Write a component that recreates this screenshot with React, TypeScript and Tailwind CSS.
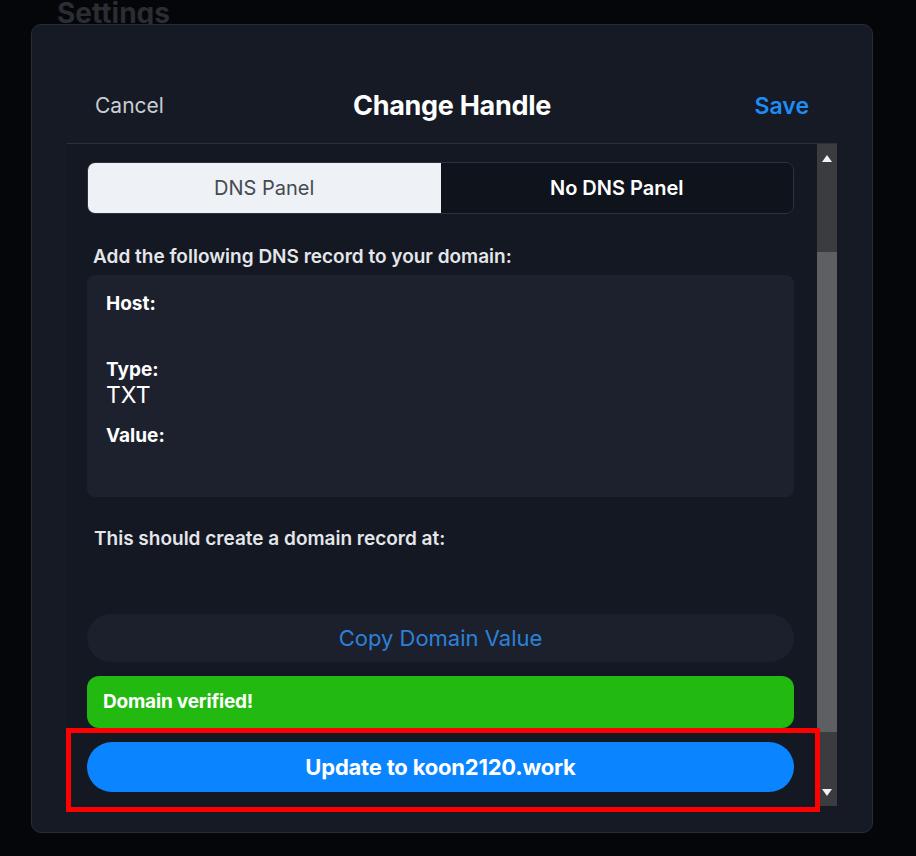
import React from 'react';

const font = { fontFamily: 'Inter, "Noto Sans", sans-serif' };

function FakeScrollbar() {
  return (
    <div className="w-[20px] shrink-0 bg-[#3a3c40] flex flex-col items-center">
      <div className="h-[28px] w-full flex items-center justify-center">
        <svg width="10" height="7" viewBox="0 0 10 7">
          <path d="M5 0 L10 7 L0 7 Z" fill="#f2f2f2" />
        </svg>
      </div>
      <div className="h-[80px]" />
      <div className="w-full h-[480px] bg-[#5e5f62]" />
      <div className="flex-1" />
      <div className="h-[28px] w-full flex items-center justify-center">
        <svg width="10" height="7" viewBox="0 0 10 7">
          <path d="M0 0 L10 0 L5 7 Z" fill="#f2f2f2" />
        </svg>
      </div>
    </div>
  );
}

export default function App() {
  return (
    <div className="relative w-[916px] h-[856px] bg-[#050609] overflow-hidden" style={font}>
      <div className="pl-[57px] -mt-[3px] text-[28px] font-bold text-[#2a2d33] leading-[32px]">Settings</div>

      <div className="absolute left-[31px] top-[24px] w-[842px] h-[809px] rounded-[10px] bg-[#151a24] border border-[#272c37] flex flex-col px-[35px]">
        <div className="pt-[64px] pb-[20px] px-[28px] grid grid-cols-[1fr_auto_1fr] items-center border-b border-[#2a303c]">
          <span className="justify-self-start text-[21px] text-[#c9cdd4] leading-[34px]">Cancel</span>
          <span className="text-[27px] font-bold text-white leading-[34px] tracking-[-0.3px]">Change Handle</span>
          <span className="justify-self-end text-[23px] font-semibold text-[#1f8cf5] leading-[34px]">Save</span>
        </div>

        <div className="flex h-[662px] bg-[#131822]">
          <div className="flex-1 pl-[20px] pr-[23px] pt-[18px] flex flex-col">
            <div className="flex h-[52px] rounded-[8px] border border-[#2c3340] overflow-hidden">
              <div className="flex-1 bg-[#eef1f5] flex items-center justify-center text-[20px] text-[#454a52]">DNS Panel</div>
              <div className="flex-1 bg-[#0f131b] flex items-center justify-center text-[20px] font-semibold text-white">No DNS Panel</div>
            </div>

            <div className="mt-[31px] pl-[6px] text-[19px] font-semibold text-[#e4e6ea] leading-[24px]">
              Add the following DNS record to your domain:
            </div>

            <div className="mt-[6px] rounded-[8px] bg-[#1c212d] px-[19px] pt-[17px] pb-[23px] flex flex-col text-white">
              <div className="text-[19px] font-bold leading-[24px]">Host:</div>
              <div className="h-[26px]" />
              <div className="mt-[16px] text-[19px] font-bold leading-[24px]">Type:</div>
              <div className="text-[23px] leading-[26px]">TXT</div>
              <div className="mt-[16px] text-[19px] font-bold leading-[24px]">Value:</div>
              <div className="h-[26px]" />
            </div>

            <div className="mt-[30px] pl-[7px] text-[19px] font-semibold text-[#e4e6ea] leading-[24px]">
              This should create a domain record at:
            </div>

            <div className="mt-[63px] h-[48px] rounded-full bg-[#1b202c] flex items-center justify-center text-[22px] text-[#2d80d8]">
              Copy Domain Value
            </div>

            <div className="mt-[14px] h-[52px] rounded-[12px] bg-[#22ba10] flex items-center px-[16px] text-[19px] font-bold text-white tracking-[-0.2px]">
              Domain verified!
            </div>

            <div className="mt-[14px] h-[50px] rounded-full bg-[#0a85ff] flex items-center justify-center text-[22px] font-bold text-white tracking-[-0.2px]">
              Update to koon2120.work
            </div>
          </div>
          <FakeScrollbar />
        </div>
      </div>

      <div className="absolute left-[66px] top-[728px] w-[754px] h-[84px] border-[5px] border-[#ff0000]" />
    </div>
  );
}
